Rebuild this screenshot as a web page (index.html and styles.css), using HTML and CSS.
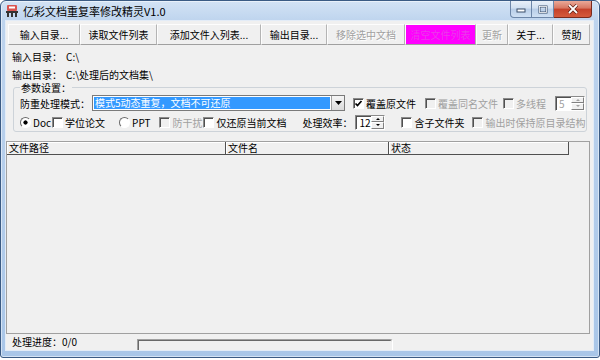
FILE: index.html
```html
<!DOCTYPE html>
<html lang="zh-CN">
<head>
    <meta charset="UTF-8">
    <title>亿彩文档重复率修改精灵V1.0</title>
    <link rel="stylesheet" href="styles.css">
</head>
<body>
<div class="window">
    <div class="titlebar">
        <svg class="app-icon" width="14" height="14" viewBox="0 0 14 14">
            <rect x="2" y="1" width="10" height="6" rx="1" fill="#d9534f"/>
            <rect x="4" y="2.5" width="6" height="2" fill="#fff"/>
            <rect x="1" y="7" width="12" height="2" fill="#333"/>
            <rect x="2" y="9" width="2" height="4" fill="#333"/>
            <rect x="6" y="9" width="2" height="4" fill="#333"/>
            <rect x="10" y="9" width="2" height="4" fill="#333"/>
        </svg>
        <span class="title">亿彩文档重复率修改精灵V1.0</span>
        <div class="caption-btns">
            <span class="cap-btn cap-min">
                <svg width="10" height="8" viewBox="0 0 10 8"><rect x="1" y="4" width="8" height="3" fill="#fff" stroke="#3b4f6b" stroke-width="1"/></svg>
            </span>
            <span class="cap-btn cap-max">
                <svg width="10" height="9" viewBox="0 0 10 9"><rect x="1.5" y="1.5" width="7" height="6" fill="none" stroke="#3b4f6b" stroke-width="2"/><rect x="1.5" y="1.5" width="7" height="6" fill="none" stroke="#fff" stroke-width="0.8"/></svg>
            </span>
            <span class="cap-btn cap-close">
                <svg width="12" height="10" viewBox="0 0 12 10"><path d="M2 1 L10 9 M10 1 L2 9" stroke="#5a1a10" stroke-width="3.2"/><path d="M2 1 L10 9 M10 1 L2 9" stroke="#fff" stroke-width="1.8"/></svg>
            </span>
        </div>
    </div>

    <div class="client">
        <div class="toolbar">
            <button class="tb-btn btn-input">输入目录...</button>
            <button class="tb-btn btn-read">读取文件列表</button>
            <button class="tb-btn btn-add">添加文件入列表...</button>
            <button class="tb-btn btn-output">输出目录...</button>
            <button class="tb-btn btn-remove disabled">移除选中文档</button>
            <button class="tb-btn btn-clear">清空文件列表</button>
            <button class="tb-btn btn-update disabled">更新</button>
            <button class="tb-btn btn-about">关于...</button>
            <button class="tb-btn btn-donate">赞助</button>
        </div>

        <div class="info">
            <div class="info-row"><span class="info-label">输入目录：</span><span>C:\</span></div>
            <div class="info-row"><span class="info-label">输出目录：</span><span>C:\处理后的文档集\</span></div>
        </div>

        <fieldset class="params">
            <legend>参数设置：</legend>
            <div class="prow prow-1">
                <span class="mode-label">防重处理模式：</span>
                <div class="combo">
                    <span class="combo-text">模式5动态重复，文档不可还原</span>
                    <span class="combo-arrow">
                        <svg width="7" height="4" viewBox="0 0 7 4"><path d="M0 0 H7 L3.5 4 Z" fill="#000"/></svg>
                    </span>
                </div>
                <label class="opt opt-cover"><span class="cb checked"><svg width="9" height="9" viewBox="0 0 9 9"><path d="M1.5 4.5 L3.5 6.5 L7.5 2" fill="none" stroke="#000" stroke-width="1.7"/></svg></span>覆盖原文件</label>
                <label class="opt opt-same disabled"><span class="cb"></span>覆盖同名文件</label>
                <label class="opt opt-thread disabled"><span class="cb"></span>多线程</label>
                <div class="spin spin-thread disabled">
                    <span class="spin-val">5</span>
                    <span class="spin-btns"><span class="spin-up"></span><span class="spin-dn"></span></span>
                </div>
            </div>
            <div class="prow prow-2">
                <label class="opt opt-doc"><span class="radio checked"></span>Doc</label>
                <label class="opt opt-thesis"><span class="cb"></span>学位论文</label>
                <label class="opt opt-ppt"><span class="radio"></span>PPT</label>
                <label class="opt opt-noise disabled"><span class="cb"></span>防干扰</label>
                <label class="opt opt-restore"><span class="cb"></span>仅还原当前文档</label>
                <span class="rate-label">处理效率：</span>
                <div class="spin spin-rate">
                    <span class="spin-val">12</span>
                    <span class="spin-btns"><span class="spin-up"></span><span class="spin-dn"></span></span>
                </div>
                <label class="opt opt-sub"><span class="cb"></span>含子文件夹</label>
                <label class="opt opt-keep disabled"><span class="cb"></span>输出时保持原目录结构</label>
            </div>
        </fieldset>

        <div class="listview">
            <div class="lv-head">
                <span class="lv-col col-path">文件路径</span>
                <span class="lv-col col-name">文件名</span>
                <span class="lv-col col-state">状态</span>
            </div>
            <div class="lv-body"></div>
        </div>

        <div class="statusbar">
            <span class="status-label">处理进度：0/0</span>
            <div class="progress"></div>
        </div>
    </div>
</div>
</body>
</html>
```

FILE: styles.css
```css
* {
    box-sizing: border-box;
}
body {
    margin: 0;
    background: #fff;
    font-family: "Noto Sans CJK SC", sans-serif;
    font-size: 10px;
    color: #000;
}
.window {
    width: 600px;
    height: 358px;
    border: 1px solid #3b5b84;
    border-radius: 6px 6px 3px 3px;
    background: linear-gradient(#d3e3f5, #bed4ee 20px, #a9c6e8);
    box-shadow: inset 0 0 0 1px rgba(255,255,255,0.5);
    padding: 0 6px 7px 5px;
    display: flex;
    flex-direction: column;
}

/* title bar */
.titlebar {
    height: 20px;
    display: flex;
    align-items: center;
}
.app-icon {
    margin-left: -1px;
}
.title {
    margin-left: 4px;
    font-size: 11px;
    line-height: 14px;
}
.caption-btns {
    display: flex;
    align-self: flex-start;
    margin-left: auto;
    margin-right: 1px;
}
.cap-btn {
    height: 17px;
    display: flex;
    align-items: center;
    justify-content: center;
    border: 1px solid #6d86a8;
    border-top: none;
    background: linear-gradient(#e9f0f9, #d1e0f1 45%, #b8cde7 50%, #cfe0f3);
}
.cap-min {
    width: 22px;
    border-radius: 0 0 0 4px;
}
.cap-max {
    width: 22px;
    border-left: none;
}
.cap-close {
    width: 38px;
    border-color: #7a2a1d;
    border-left: none;
    border-radius: 0 0 4px 0;
    background: linear-gradient(#eaa998, #d77661 45%, #c4412a 50%, #d55a3c);
}

/* client */
.client {
    flex: 1;
    background: #f0f0f0;
    display: flex;
    flex-direction: column;
    box-shadow: 0 0 0 1px #e3ecf7;
}
.toolbar {
    display: flex;
    height: 21px;
    margin: 3px 3px 0 2px;
}
.tb-btn {
    appearance: none;
    height: 21px;
    padding: 0;
    border: 1px solid;
    border-color: #fdfdfd #b4b4b4 #a0a0a0 #fdfdfd;
    background: #f0f0f0;
    font: inherit;
    color: #000;
    line-height: 19px;
    text-align: center;
}
.tb-btn.disabled {
    color: #a0a0a0;
    text-shadow: 1px 1px 0 #fff;
}
.btn-input { width: 72px; }
.btn-read { width: 77px; }
.btn-add { width: 104px; }
.btn-output { width: 66px; }
.btn-remove { width: 78px; }
.btn-clear {
    width: 71px;
    background: #ff00ff;
    color: #ea3cea;
}
.btn-update { width: 32px; }
.btn-about { width: 45px; }
.btn-donate { width: 37px; }

.info {
    margin-top: 6px;
    padding-left: 6px;
}
.info-row {
    display: flex;
    height: 12px;
    line-height: 12px;
}
.info-row + .info-row {
    margin-top: 6px;
}
.info-label {
    width: 54px;
}

/* parameter group */
.params {
    margin: 1px 6px 0 7px;
    padding: 0 0 1px 6px;
    border: 1px solid #cdd3d9;
    border-radius: 3px;
    min-width: 0;
}
.params legend {
    padding: 0 1px;
    height: 11px;
    line-height: 11px;
}
.prow {
    display: flex;
    align-items: center;
    height: 16px;
    white-space: nowrap;
}
.prow-1 { margin-top: 2px; }
.prow-2 { margin-top: 3px; }
.mode-label {
    width: 72px;
}
.combo {
    width: 253px;
    height: 16px;
    display: flex;
    border: 1px solid #7a7a7a;
    background: #fff;
}
.combo-text {
    flex: 1;
    margin: 1px;
    padding-left: 1px;
    background: #3399ff;
    color: #fff;
    line-height: 12px;
}
.combo-arrow {
    width: 13px;
    display: flex;
    align-items: center;
    justify-content: center;
    border-left: 1px solid #a0a0a0;
    background: linear-gradient(#f6f6f6, #dadada);
}

.opt {
    display: flex;
    align-items: center;
    gap: 2px;
}
.opt.disabled {
    color: #a0a0a0;
}
.cb {
    width: 11px;
    height: 11px;
    display: flex;
    align-items: center;
    justify-content: center;
    border: 1px solid;
    border-color: #8a8a8a #fff #fff #8a8a8a;
    box-shadow: inset 1px 1px 0 #505050;
    background: #fff;
}
.disabled .cb {
    background: #f0f0f0;
}
.radio {
    width: 11px;
    height: 11px;
    border-radius: 50%;
    border: 1px solid;
    border-color: #6a6a6a #fff #fff #6a6a6a;
    background: #fff;
}
.radio.checked {
    background: radial-gradient(circle, #000 0 1.8px, #fff 2.4px);
}

.opt-cover { margin-left: 8px; }
.opt-same { margin-left: 9px; }
.opt-thread { margin-left: 5px; }
.spin-thread { margin-left: 9px; }
.opt-thesis { margin-left: 1px; }
.opt-ppt { margin-left: 14px; }
.opt-noise { margin-left: 9px; }
.opt-restore { margin-left: 1px; }
.rate-label { margin-left: 16px; }
.spin-rate { margin-left: 3px; }
.opt-sub { margin-left: 16px; }
.opt-keep { margin-left: 8px; }

.spin {
    width: 30px;
    height: 15px;
    display: flex;
    border: 1px solid;
    border-color: #8a8a8a #fff #fff #8a8a8a;
    box-shadow: inset 1px 1px 0 #505050;
    background: #fff;
}
.spin-val {
    flex: 1;
    padding-left: 3px;
    line-height: 13px;
}
.spin.disabled .spin-val {
    color: #a0a0a0;
}
.spin-btns {
    width: 13px;
    display: flex;
    flex-direction: column;
}
.spin-up, .spin-dn {
    flex: 1;
    display: flex;
    align-items: center;
    justify-content: center;
    border: 1px solid;
    border-color: #fff #808080 #808080 #fff;
    background: #f0f0f0;
}
.spin-up::after {
    content: "";
    border: 2px solid transparent;
    border-bottom: 2px solid #000;
    border-top: none;
}
.spin-dn::after {
    content: "";
    border: 2px solid transparent;
    border-top: 2px solid #000;
    border-bottom: none;
}
.spin.disabled .spin-up::after {
    border-bottom-color: #a0a0a0;
}
.spin.disabled .spin-dn::after {
    border-top-color: #a0a0a0;
}

/* file list */
.listview {
    flex: 1;
    margin: 9px 3px 0 0;
    border: 1px solid #a0a0a0;
    display: flex;
    flex-direction: column;
}
.lv-head {
    display: flex;
    height: 13px;
}
.lv-col {
    padding-left: 2px;
    line-height: 12px;
    border-right: 1px solid #505050;
    border-bottom: 1px solid #505050;
    box-shadow: inset 1px 1px 0 #fff;
}
.col-path { width: 219px; }
.col-name { width: 163px; }
.col-state { width: 180px; }
.lv-body {
    flex: 1;
}

.statusbar {
    height: 16px;
    display: flex;
    padding-left: 6px;
}
.status-label {
    width: 125px;
    line-height: 16px;
}
.progress {
    width: 256px;
    margin-top: 5px;
    border-top: 1px solid #a0a0a0;
    border-left: 1px solid #a0a0a0;
    border-right: 1px solid #fff;
    border-radius: 0 3px 0 0;
    box-shadow: inset 1px 1px 0 #696969;
}
```
